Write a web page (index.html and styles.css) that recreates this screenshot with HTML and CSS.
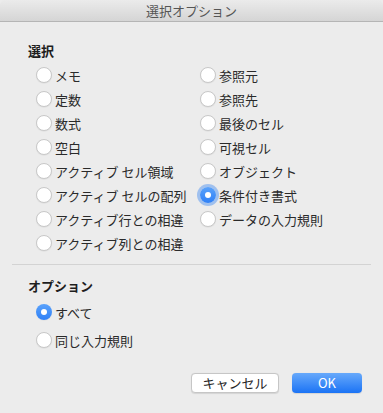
FILE: index.html
```html
<!DOCTYPE html>
<html lang="ja">
<head>
    <meta charset="UTF-8">
    <meta name="viewport" content="width=device-width, initial-scale=1.0">
    <title>選択オプション</title>
    <link rel="stylesheet" href="styles.css">
</head>
<body>
    <div class="dialog">
        <div class="title-bar">選択オプション</div>

        <div class="section">
            <h2 class="section-title">選択</h2>
            <div class="columns">
                <div class="column">
                    <label class="radio-row"><span class="radio"></span>メモ</label>
                    <label class="radio-row"><span class="radio"></span>定数</label>
                    <label class="radio-row"><span class="radio"></span>数式</label>
                    <label class="radio-row"><span class="radio"></span>空白</label>
                    <label class="radio-row"><span class="radio"></span>アクティブ セル領域</label>
                    <label class="radio-row"><span class="radio"></span>アクティブ セルの配列</label>
                    <label class="radio-row"><span class="radio"></span>アクティブ行との相違</label>
                    <label class="radio-row"><span class="radio"></span>アクティブ列との相違</label>
                </div>
                <div class="column">
                    <label class="radio-row"><span class="radio"></span>参照元</label>
                    <label class="radio-row"><span class="radio"></span>参照先</label>
                    <label class="radio-row"><span class="radio"></span>最後のセル</label>
                    <label class="radio-row"><span class="radio"></span>可視セル</label>
                    <label class="radio-row"><span class="radio"></span>オブジェクト</label>
                    <label class="radio-row"><span class="radio checked focused"></span>条件付き書式</label>
                    <label class="radio-row"><span class="radio"></span>データの入力規則</label>
                </div>
            </div>
        </div>

        <hr class="separator">

        <div class="section options">
            <h2 class="section-title">オプション</h2>
            <label class="radio-row tall"><span class="radio checked"></span>すべて</label>
            <label class="radio-row tall"><span class="radio"></span>同じ入力規則</label>
        </div>

        <div class="button-bar">
            <button type="button" class="button">キャンセル</button>
            <button type="button" class="button primary">OK</button>
        </div>
    </div>
</body>
</html>
```

FILE: styles.css
```css
body {
    margin: 0;
    padding: 0;
    background-color: #ececec;
    font-family: "Noto Sans CJK JP", "Noto Sans", sans-serif;
    color: #2a2a2a;
}

.dialog {
    width: 383px;
    height: 413px;
    background-color: #ececec;
}

.title-bar {
    height: 21px;
    line-height: 21px;
    text-align: center;
    font-size: 13px;
    color: #555;
    background: linear-gradient(#ebebeb, #d5d5d5);
    border-bottom: 1px solid #b5b5b5;
    border-radius: 5px 5px 0 0;
}

.section {
    padding-left: 28px;
}

.section-title {
    margin: 21px 0 4px 0;
    font-size: 13px;
    line-height: 16px;
    font-weight: bold;
    color: #1e1e1e;
}

.columns {
    display: flex;
    padding-left: 8px;
}

.column {
    display: flex;
    flex-direction: column;
    width: 164px;
}

.radio-row {
    display: flex;
    align-items: center;
    height: 24px;
    font-size: 13px;
    white-space: nowrap;
}

.radio-row.tall {
    height: 28px;
    padding-left: 8px;
}

.radio {
    box-sizing: border-box;
    flex-shrink: 0;
    width: 16px;
    height: 16px;
    margin-right: 3px;
    border-radius: 50%;
    background-color: #fff;
    border: 1px solid #c8c8c8;
    box-shadow: 0 0.5px 1px rgba(0, 0, 0, 0.08);
    display: flex;
    align-items: center;
    justify-content: center;
}

.radio.checked {
    border: none;
    background: linear-gradient(#5aa2fb, #2f80f6);
}

.radio.checked::after {
    content: "";
    width: 6px;
    height: 6px;
    border-radius: 50%;
    background-color: #fff;
}

.radio.focused {
    box-shadow: 0 0 0 3px rgba(96, 156, 240, 0.55);
}

.separator {
    margin: 9px 12px 0 12px;
    border: none;
    border-top: 1px solid #d3d3d3;
}

.options .section-title {
    margin-top: 13px;
}

.button-bar {
    display: flex;
    justify-content: flex-end;
    gap: 13px;
    padding: 19px 21px 0 0;
}

.button {
    height: 20px;
    padding: 0;
    font-family: inherit;
    font-size: 13px;
    line-height: 18px;
    color: #262626;
    background-color: #fff;
    border: 1px solid #c6c6c6;
    border-radius: 4px;
    box-shadow: 0 0.5px 1px rgba(0, 0, 0, 0.1);
    width: 88px;
}

.button.primary {
    width: 70px;
    color: #fff;
    border: none;
    background: linear-gradient(#67a9fb, #1b73f5);
}
```
